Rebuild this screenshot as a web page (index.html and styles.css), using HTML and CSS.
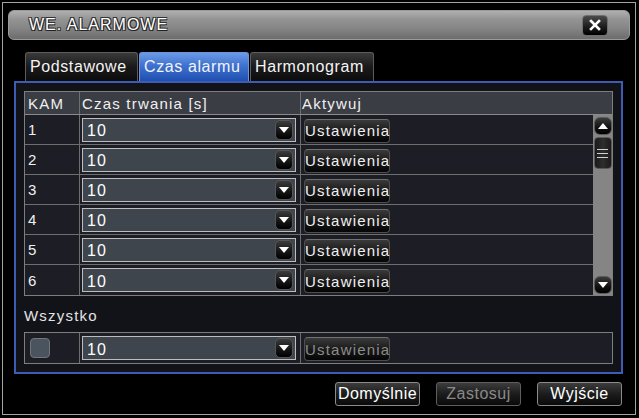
FILE: index.html
```html
<!DOCTYPE html>
<html lang="pl">
<head>
<meta charset="utf-8">
<title>WE. ALARMOWE</title>
<link rel="stylesheet" href="styles.css">
</head>
<body>
<div class="window">
  <div class="titlebar">
    <span class="title">WE. ALARMOWE</span>
    <button class="close" type="button" aria-label="Zamknij">
      <svg width="12" height="12" viewBox="0 0 12 12"><path d="M2 2 L10 10 M10 2 L2 10" stroke="#fff" stroke-width="2.6" stroke-linecap="square"/></svg>
    </button>
  </div>

  <div class="tabs">
    <div class="tab tab-podst">Podstawowe</div>
    <div class="tab tab-czas active">Czas alarmu</div>
    <div class="tab tab-harm">Harmonogram</div>
  </div>

  <div class="panel">
    <div class="table">
      <div class="row head">
        <div class="cell c1">KAM</div>
        <div class="cell c2">Czas trwania [s]</div>
        <div class="cell c3">Aktywuj</div>
      </div>
      <div class="tbody">
        <div class="rows">
          <div class="row"><div class="cell c1">1</div><div class="cell c2"><div class="select"><span>10</span><span class="arrow"><svg width="10" height="6" viewBox="0 0 10 6"><path d="M0 0 H10 L5 6 Z" fill="#fff"/></svg></span></div></div><div class="cell c3"><button class="btn-set" type="button">Ustawienia</button></div></div>
          <div class="row"><div class="cell c1">2</div><div class="cell c2"><div class="select"><span>10</span><span class="arrow"><svg width="10" height="6" viewBox="0 0 10 6"><path d="M0 0 H10 L5 6 Z" fill="#fff"/></svg></span></div></div><div class="cell c3"><button class="btn-set" type="button">Ustawienia</button></div></div>
          <div class="row"><div class="cell c1">3</div><div class="cell c2"><div class="select"><span>10</span><span class="arrow"><svg width="10" height="6" viewBox="0 0 10 6"><path d="M0 0 H10 L5 6 Z" fill="#fff"/></svg></span></div></div><div class="cell c3"><button class="btn-set" type="button">Ustawienia</button></div></div>
          <div class="row"><div class="cell c1">4</div><div class="cell c2"><div class="select"><span>10</span><span class="arrow"><svg width="10" height="6" viewBox="0 0 10 6"><path d="M0 0 H10 L5 6 Z" fill="#fff"/></svg></span></div></div><div class="cell c3"><button class="btn-set" type="button">Ustawienia</button></div></div>
          <div class="row"><div class="cell c1">5</div><div class="cell c2"><div class="select"><span>10</span><span class="arrow"><svg width="10" height="6" viewBox="0 0 10 6"><path d="M0 0 H10 L5 6 Z" fill="#fff"/></svg></span></div></div><div class="cell c3"><button class="btn-set" type="button">Ustawienia</button></div></div>
          <div class="row"><div class="cell c1">6</div><div class="cell c2"><div class="select"><span>10</span><span class="arrow"><svg width="10" height="6" viewBox="0 0 10 6"><path d="M0 0 H10 L5 6 Z" fill="#fff"/></svg></span></div></div><div class="cell c3"><button class="btn-set" type="button">Ustawienia</button></div></div>
        </div>
        <div class="scrollbar">
          <div class="sb-btn"><svg width="10" height="6" viewBox="0 0 10 6"><path d="M0 6 H10 L5 0 Z" fill="#fff"/></svg></div>
          <div class="sb-thumb"><span></span><span></span><span></span></div>
          <div class="sb-space"></div>
          <div class="sb-btn"><svg width="10" height="6" viewBox="0 0 10 6"><path d="M0 0 H10 L5 6 Z" fill="#fff"/></svg></div>
        </div>
      </div>
    </div>

    <div class="label">Wszystko</div>

    <div class="allrow">
      <div class="cell c1"><span class="checkbox"></span></div>
      <div class="cell c2"><div class="select"><span>10</span><span class="arrow"><svg width="10" height="6" viewBox="0 0 10 6"><path d="M0 0 H10 L5 6 Z" fill="#fff"/></svg></span></div></div>
      <div class="cell c3"><button class="btn-set disabled" type="button">Ustawienia</button></div>
    </div>
  </div>

  <div class="actions">
    <button class="btn" type="button">Domyślnie</button>
    <button class="btn disabled" type="button">Zastosuj</button>
    <button class="btn" type="button">Wyjście</button>
  </div>
</div>
</body>
</html>
```

FILE: styles.css
```css
* { box-sizing: border-box; }

html, body {
  margin: 0;
  padding: 0;
  background: #000;
}

body {
  font-family: "Liberation Sans", Arial, sans-serif;
  color: #f0f0f0;
}

.window {
  margin: 2px 0 0 2px;
  width: 634px;
  height: 413px;
  border: 1px solid #a4a4a4;
  background: #000;
  display: flex;
  flex-direction: column;
}

/* title bar */
.titlebar {
  margin: 7px 5px 0 5px;
  height: 30px;
  border-radius: 6px;
  border: 1px solid #9a9a9a;
  background: linear-gradient(#b0b0b0 0%, #939393 30%, #868686 60%, #6c6c6c 100%);
  display: flex;
  align-items: center;
  justify-content: space-between;
  padding: 0 21px 0 20px;
}

.title {
  font-size: 16px;
  letter-spacing: 1px;
  color: #fff;
  text-shadow: 1px 1px 0 #222, -1px -1px 0 #333, 1px -1px 0 #333, -1px 1px 0 #333;
}

.close {
  width: 26px;
  height: 21px;
  padding: 0;
  border: 1px solid #707070;
  border-radius: 4px;
  background: linear-gradient(#4a4a4a, #1a1a1a 60%, #000);
  display: flex;
  align-items: center;
  justify-content: center;
}

/* tabs */
.tabs {
  margin: 12px 0 0 22px;
  display: flex;
  gap: 1px;
  height: 29px;
}

.tab {
  height: 29px;
  border: 1px solid #5c5c5c;
  border-bottom: none;
  border-radius: 3px 3px 0 0;
  background: linear-gradient(#3a3a3a, #1a1a1a 50%, #0c0c0c);
  font-size: 16px;
  letter-spacing: 0.6px;
  color: #f4f4f4;
  display: flex;
  align-items: center;
  padding-left: 4px;
  white-space: nowrap;
}

.tab-podst { width: 113px; }
.tab-czas { width: 110px; }
.tab-harm { width: 124px; }

.tab.active {
  border-color: #6f92d8;
  background: linear-gradient(#6b9ae6, #3f72d0 45%, #1f4fb0 100%);
}

/* panel */
.panel {
  margin-left: 11px;
  width: 609px;
  height: 293px;
  border: 2px solid #3d5cb4;
  background: #121219;
  padding: 8px 8px 0 8px;
  display: flex;
  flex-direction: column;
}

.table {
  width: 589px;
  border: 1px solid #7e7e7e;
  background: #1c1d25;
}

.row {
  display: grid;
  grid-template-columns: 55px 221px 1fr;
  height: 30px;
  border-bottom: 1px solid #6e6e6e;
}

.row.head {
  height: 23px;
  background: #3a3d44;
  border-bottom: 1px solid #8a8a8a;
}

.rows .row:last-child { border-bottom: none; }

.cell {
  display: flex;
  align-items: center;
  border-right: 1px solid #6e6e6e;
  font-size: 15px;
  letter-spacing: 1.2px;
  color: #f0f0f0;
}

.c1 { padding-left: 3px; }
.c2 { padding-left: 2px; }
.c3 { padding-left: 3px; border-right: none; }
.head .c3 { padding-left: 1px; }

.tbody {
  display: flex;
}

.rows {
  flex: 1;
}

/* select */
.select {
  width: 214px;
  height: 24px;
  border: 1px solid #bdbdbd;
  background: #3e454d;
  display: flex;
  align-items: center;
  justify-content: space-between;
  padding: 0 2px 0 4px;
  font-size: 16px;
  letter-spacing: 1px;
  color: #fff;
}

.select > span:first-child { padding-top: 3px; }

.arrow {
  width: 18px;
  height: 20px;
  border-radius: 5px;
  border: 1px solid #555;
  background: linear-gradient(#3c3c3c, #141414 60%, #000);
  display: flex;
  align-items: center;
  justify-content: center;
}

/* Ustawienia button */
.btn-set {
  width: 86px;
  height: 24px;
  margin-top: 2px;
  border: 1px solid #4e4e4e;
  border-top-color: #707070;
  border-radius: 4px;
  background: linear-gradient(#3a3a3a, #1a1a1a 50%, #050505);
  font-family: "Liberation Sans", Arial, sans-serif;
  font-size: 15px;
  letter-spacing: 1.2px;
  color: #f0f0f0;
  padding: 0;
  text-align: left;
  white-space: nowrap;
  overflow: visible;
}

.btn-set.disabled { color: #8c8c8c; }

/* scrollbar */
.scrollbar {
  width: 19px;
  background: #858585;
  display: flex;
  flex-direction: column;
  align-items: center;
  padding: 2px 0 1px 0;
}

.sb-btn {
  width: 18px;
  height: 18px;
  border-radius: 6px;
  border: 1px solid #5a5a5a;
  background: linear-gradient(#3a3a3a, #111 60%, #000);
  display: flex;
  align-items: center;
  justify-content: center;
}

.sb-thumb {
  margin-top: 2px;
  width: 18px;
  height: 32px;
  border-radius: 4px;
  border: 1px solid #5a5a5a;
  background: linear-gradient(90deg, #1a1a1a, #2e2e2e 50%, #1a1a1a);
  display: flex;
  flex-direction: column;
  align-items: center;
  justify-content: center;
  gap: 3px;
}

.sb-thumb span {
  width: 11px;
  height: 1px;
  background: #d0d0d0;
}

.sb-space { flex: 1; }

/* Wszystko */
.label {
  height: 36px;
  display: flex;
  align-items: center;
  font-size: 15px;
  letter-spacing: 1.2px;
  color: #e4e4e4;
  padding-top: 2px;
}

.allrow {
  width: 589px;
  height: 32px;
  border: 1px solid #7e7e7e;
  background: #1c1d25;
  display: grid;
  grid-template-columns: 55px 221px 1fr;
}

.allrow .c1 { padding-left: 5px; }

.checkbox {
  width: 20px;
  height: 20px;
  border-radius: 4px;
  border: 1px solid #6e757c;
  background: #4a545e;
}

/* bottom buttons */
.actions {
  display: flex;
  justify-content: flex-end;
  gap: 16px;
  padding-right: 13px;
  margin-top: 8px;
}

.btn {
  width: 85px;
  height: 24px;
  border: 1px solid #8a8a8a;
  border-radius: 3px;
  background: linear-gradient(#3c3c3c, #1c1c1c 50%, #0a0a0a);
  font-family: "Liberation Sans", Arial, sans-serif;
  font-size: 16px;
  letter-spacing: 0.5px;
  color: #fff;
  padding: 0;
  white-space: nowrap;
}

.btn.disabled {
  color: #8a8a8a;
  border-color: #5e5e5e;
}
```
